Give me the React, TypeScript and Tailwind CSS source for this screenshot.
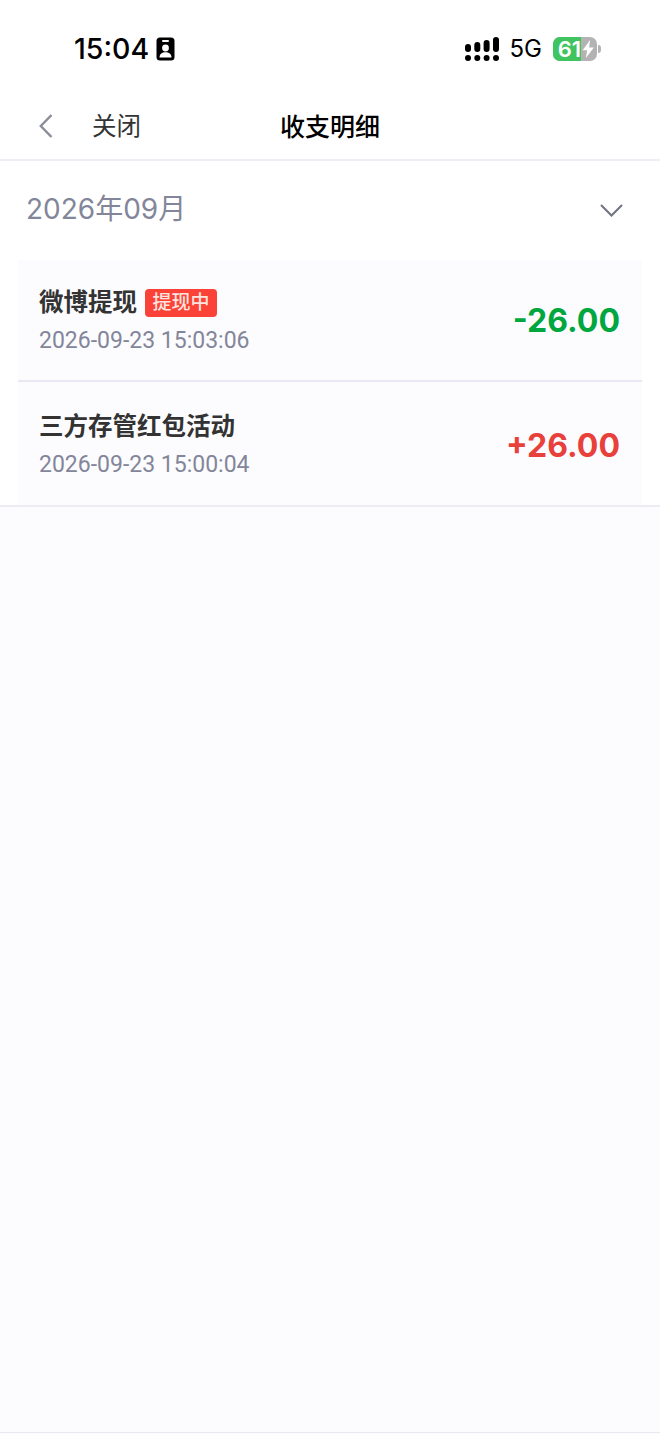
const cjk = "font-['Inter','Noto_Sans_CJK_SC',sans-serif]";

const SignalDots = () => (
  <svg width="34" height="24" viewBox="0 0 34 24" fill="#000">
    <circle cx="3" cy="21" r="3" />
    <circle cx="12.3" cy="21" r="3" />
    <circle cx="21.6" cy="21" r="3" />
    <circle cx="31" cy="21" r="3" />
    <rect x="0" y="7" width="6" height="8" rx="3" />
    <rect x="9.3" y="5" width="6" height="10" rx="3" />
    <rect x="18.6" y="3" width="6" height="12" rx="3" />
    <rect x="28" y="0" width="6" height="15" rx="3" />
  </svg>
);

const BadgeIcon = () => (
  <svg width="19" height="24" viewBox="0 0 19 24">
    <rect x="0.5" y="0.5" width="18" height="23" rx="3.5" fill="#000" />
    <rect x="6" y="3" width="7" height="2" rx="1" fill="#fff" />
    <circle cx="9.5" cy="11" r="3.4" fill="#fff" />
    <path d="M3.5 20.5c0-3.6 2.6-5.3 6-5.3s6 1.7 6 5.3z" fill="#fff" />
  </svg>
);

const Battery = () => (
  <div className="flex items-center">
    <div className="relative flex h-[24px] w-[44px] overflow-hidden rounded-[7px] bg-[#b3b3b3]">
      <div className="flex w-[28px] items-center justify-end bg-[#3fc45f] text-[22px] leading-none font-semibold text-white font-['Inter',sans-serif]">
        61
      </div>
      <svg className="mt-[2px]" width="15" height="20" viewBox="0 0 14 18" fill="#fff">
        <path d="M8.5 0.5 1.5 10.2h4.2L4.6 17.5l7.4-10H7.6z" />
      </svg>
    </div>
    <div className="ml-[1px] h-[8px] w-[3px] rounded-r-full bg-[#b3b3b3]" />
  </div>
);

const StatusBar = () => (
  <div className="flex h-[92px] items-start justify-between bg-white pl-[74px] pr-[59px] pt-[33px]">
    <div className="flex items-center gap-[7px]">
      <span className="text-[28.5px] leading-[32px] font-medium text-black font-['Inter',sans-serif]">15:04</span>
      <BadgeIcon />
    </div>
    <div className="flex items-center">
      <SignalDots />
      <span className="ml-[11px] mr-[11px] text-[24px] leading-[32px] text-black font-['Inter',sans-serif]">5G</span>
      <Battery />
    </div>
  </div>
);

const NavBar = () => (
  <div className="relative flex h-[69px] items-center border-b-2 border-[#eeeef4] bg-white pl-[39px]">
    <svg width="14" height="24" viewBox="0 0 14 24" fill="none" stroke="#8a8d99" strokeWidth="2.4">
      <path d="M12.5 1 1.8 12l10.7 11" />
    </svg>
    <span className={`ml-[39px] text-[24.5px] leading-[32px] text-[#333333] ${cjk}`}>关闭</span>
    <span className={`absolute left-0 right-0 top-[19px] text-center text-[25px] leading-[32px] font-medium text-black ${cjk}`}>
      收支明细
    </span>
  </div>
);

const MonthRow = () => (
  <div className="flex h-[99px] items-center justify-between bg-white pb-[4px] pl-[26px] pr-[37px]">
    <span className={`text-[28px] leading-[36px] text-[#83869a] ${cjk}`}>2026年09月</span>
    <svg className="mt-[4px]" width="23" height="13" viewBox="0 0 23 13" fill="none" stroke="#70747f" strokeWidth="2">
      <path d="M1 1l10.5 10.5L22 1" />
    </svg>
  </div>
);

type Item = {
  title: string;
  time: string;
  amount: string;
  color: string;
  tag?: string;
};

const items: Item[] = [
  { title: "微博提现", time: "2026-09-23 15:03:06", amount: "-26.00", color: "text-[#00a63e]", tag: "提现中" },
  { title: "三方存管红包活动", time: "2026-09-23 15:00:04", amount: "+26.00", color: "text-[#e8403b]" },
];

const Row = ({ item, last }: { item: Item; last: boolean }) => (
  <div className={`flex items-center justify-between pl-[21px] pr-[22px] ${last ? "h-[123px] pt-[2px]" : "h-[122px] border-b-2 border-[#e9e9f4]"}`}>
    <div className="flex flex-col">
      <div className="flex h-[34px] items-center">
        <span className={`text-[24.5px] leading-[32px] font-semibold text-[#333333] ${cjk}`}>{item.title}</span>
        {item.tag && (
          <span className={`ml-[8px] mt-[2px] flex h-[28px] w-[72px] items-center justify-center rounded-[4px] bg-[#fa4238] text-[19px] leading-none font-medium text-[#fde4df] ${cjk}`}>
            {item.tag}
          </span>
        )}
      </div>
      <span className="mt-[7px] text-[23px] leading-[30px] text-[#83869a] font-['Roboto',sans-serif]">{item.time}</span>
    </div>
    <span className={`mt-[2px] text-[32px] leading-[40px] font-bold ${item.color} font-['Inter',sans-serif]`}>{item.amount}</span>
  </div>
);

export default function App() {
  return (
    <div className="flex h-[1434px] w-[660px] flex-col overflow-hidden bg-[#fcfcfe]">
      <StatusBar />
      <NavBar />
      <MonthRow />
      <div className="border-b-2 border-[#ececf2] bg-white">
        <div className="mx-[18px] bg-[#fcfcfe]">
          {items.map((item, idx) => (
            <Row key={idx} item={item} last={idx === items.length - 1} />
          ))}
        </div>
      </div>
      <div className="flex-1" />
      <div className="mb-[1px] h-[1px] bg-[#e9e9ef]" />
    </div>
  );
}
